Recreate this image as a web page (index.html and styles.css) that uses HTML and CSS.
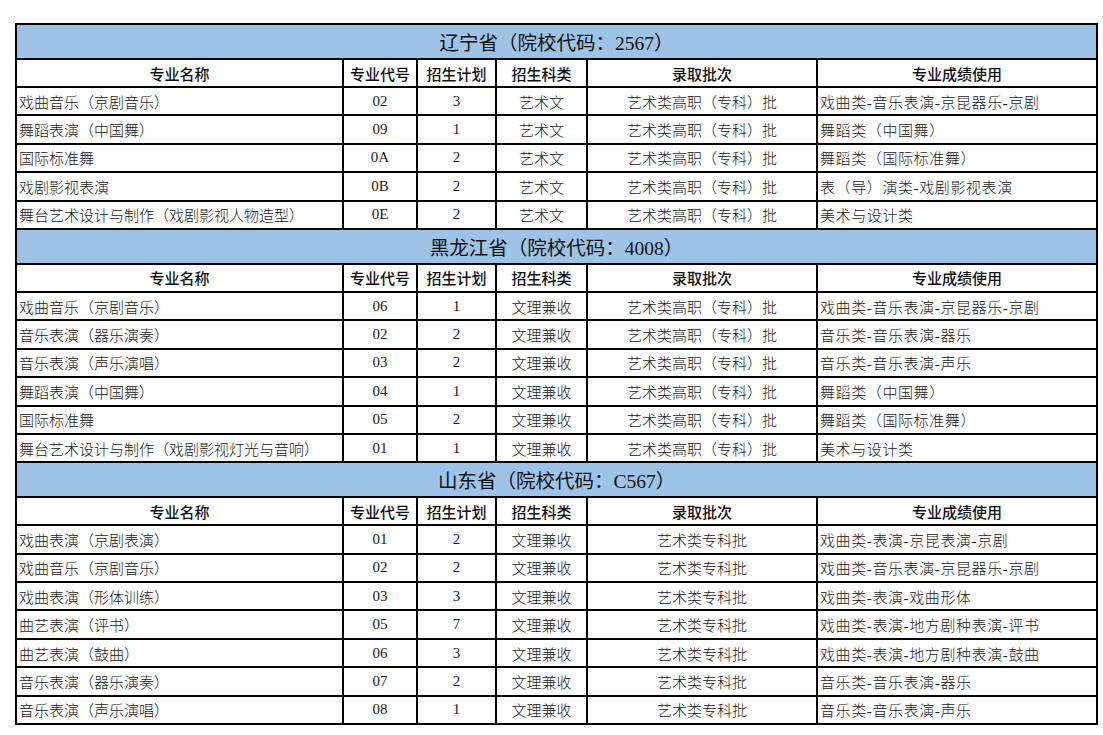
FILE: index.html
```html
<!DOCTYPE html>
<html lang="zh">
<head>
<meta charset="utf-8">
<title>招生计划</title>
<link rel="stylesheet" href="styles.css">
</head>
<body>
<table class="plan">
  <colgroup>
    <col class="c1"><col class="c2"><col class="c3"><col class="c4"><col class="c5"><col class="c6">
  </colgroup>
  <tbody>
    <tr class="title"><td colspan="6">辽宁省（院校代码：2567）</td></tr>
    <tr class="head"><td>专业名称</td><td>专业代号</td><td>招生计划</td><td>招生科类</td><td>录取批次</td><td>专业成绩使用</td></tr>
    <tr class="row"><td class="l">戏曲音乐（京剧音乐）</td><td>02</td><td>3</td><td>艺术文</td><td>艺术类高职（专科）批</td><td class="l">戏曲类-音乐表演-京昆器乐-京剧</td></tr>
    <tr class="row"><td class="l">舞蹈表演（中国舞）</td><td>09</td><td>1</td><td>艺术文</td><td>艺术类高职（专科）批</td><td class="l">舞蹈类（中国舞）</td></tr>
    <tr class="row"><td class="l">国际标准舞</td><td>0A</td><td>2</td><td>艺术文</td><td>艺术类高职（专科）批</td><td class="l">舞蹈类（国际标准舞）</td></tr>
    <tr class="row"><td class="l">戏剧影视表演</td><td>0B</td><td>2</td><td>艺术文</td><td>艺术类高职（专科）批</td><td class="l">表（导）演类-戏剧影视表演</td></tr>
    <tr class="row"><td class="l">舞台艺术设计与制作（戏剧影视人物造型）</td><td>0E</td><td>2</td><td>艺术文</td><td>艺术类高职（专科）批</td><td class="l">美术与设计类</td></tr>

    <tr class="title"><td colspan="6">黑龙江省（院校代码：4008）</td></tr>
    <tr class="head"><td>专业名称</td><td>专业代号</td><td>招生计划</td><td>招生科类</td><td>录取批次</td><td>专业成绩使用</td></tr>
    <tr class="row"><td class="l">戏曲音乐（京剧音乐）</td><td>06</td><td>1</td><td>文理兼收</td><td>艺术类高职（专科）批</td><td class="l">戏曲类-音乐表演-京昆器乐-京剧</td></tr>
    <tr class="row"><td class="l">音乐表演（器乐演奏）</td><td>02</td><td>2</td><td>文理兼收</td><td>艺术类高职（专科）批</td><td class="l">音乐类-音乐表演-器乐</td></tr>
    <tr class="row"><td class="l">音乐表演（声乐演唱）</td><td>03</td><td>2</td><td>文理兼收</td><td>艺术类高职（专科）批</td><td class="l">音乐类-音乐表演-声乐</td></tr>
    <tr class="row"><td class="l">舞蹈表演（中国舞）</td><td>04</td><td>1</td><td>文理兼收</td><td>艺术类高职（专科）批</td><td class="l">舞蹈类（中国舞）</td></tr>
    <tr class="row"><td class="l">国际标准舞</td><td>05</td><td>2</td><td>文理兼收</td><td>艺术类高职（专科）批</td><td class="l">舞蹈类（国际标准舞）</td></tr>
    <tr class="row"><td class="l">舞台艺术设计与制作（戏剧影视灯光与音响）</td><td>01</td><td>1</td><td>文理兼收</td><td>艺术类高职（专科）批</td><td class="l">美术与设计类</td></tr>

    <tr class="title"><td colspan="6">山东省（院校代码：C567）</td></tr>
    <tr class="head"><td>专业名称</td><td>专业代号</td><td>招生计划</td><td>招生科类</td><td>录取批次</td><td>专业成绩使用</td></tr>
    <tr class="row"><td class="l">戏曲表演（京剧表演）</td><td>01</td><td>2</td><td>文理兼收</td><td>艺术类专科批</td><td class="l">戏曲类-表演-京昆表演-京剧</td></tr>
    <tr class="row"><td class="l">戏曲音乐（京剧音乐）</td><td>02</td><td>2</td><td>文理兼收</td><td>艺术类专科批</td><td class="l">戏曲类-音乐表演-京昆器乐-京剧</td></tr>
    <tr class="row"><td class="l">戏曲表演（形体训练）</td><td>03</td><td>3</td><td>文理兼收</td><td>艺术类专科批</td><td class="l">戏曲类-表演-戏曲形体</td></tr>
    <tr class="row"><td class="l">曲艺表演（评书）</td><td>05</td><td>7</td><td>文理兼收</td><td>艺术类专科批</td><td class="l">戏曲类-表演-地方剧种表演-评书</td></tr>
    <tr class="row"><td class="l">曲艺表演（鼓曲）</td><td>06</td><td>3</td><td>文理兼收</td><td>艺术类专科批</td><td class="l">戏曲类-表演-地方剧种表演-鼓曲</td></tr>
    <tr class="row"><td class="l">音乐表演（器乐演奏）</td><td>07</td><td>2</td><td>文理兼收</td><td>艺术类专科批</td><td class="l">音乐类-音乐表演-器乐</td></tr>
    <tr class="row"><td class="l">音乐表演（声乐演唱）</td><td>08</td><td>1</td><td>文理兼收</td><td>艺术类专科批</td><td class="l">音乐类-音乐表演-声乐</td></tr>
  </tbody>
</table>
</body>
</html>
```

FILE: styles.css
```css
html, body {
  margin: 0;
  padding: 0;
  background: #ffffff;
  overflow: hidden;
}

body {
  padding: 23px 0 0 15px;
  font-family: "Liberation Serif", "Noto Sans CJK SC", serif;
  color: #111111;
}

.plan {
  border-collapse: collapse;
  table-layout: fixed;
  width: 1082px;
  border: 2px solid #000;
}

.c1 { width: 327px; }
.c2 { width: 74px; }
.c3 { width: 79px; }
.c4 { width: 91px; }
.c5 { width: 230px; }
.c6 { width: 280px; }

.plan td {
  border: 2px solid #000;
  padding: 0 2px;
  text-align: center;
  white-space: nowrap;
  overflow: hidden;
}

.plan td.l {
  text-align: left;
}

.plan td.l:last-child {
  letter-spacing: 0.6px;
}

.title td {
  height: 33px;
  background: #9dc3e6;
  font-size: 19.5px;
  font-weight: 400;
  color: #111;
}

.head td {
  height: 26px;
  font-family: "Noto Sans CJK SC", sans-serif;
  font-size: 15px;
  font-weight: 500;
  color: #111;
}

.row td {
  height: 26.4px;
  font-size: 15px;
  font-weight: 300;
  color: #1a1a1a;
}
```
